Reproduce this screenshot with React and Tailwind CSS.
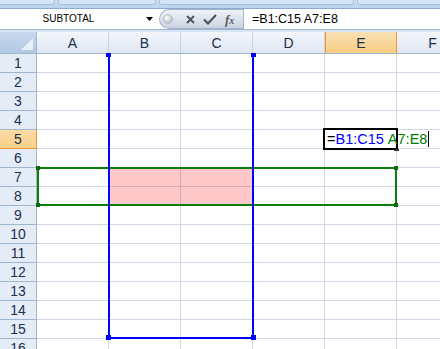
import React from 'react'

const COLS = ['A', 'B', 'C', 'D', 'E', 'F']
const ROWS = Array.from({ length: 16 }, (_, i) => i + 1)

function TopStrip() {
  return (
    <div className="h-[9px] flex bg-gradient-to-b from-[#cddff3] to-[#bcd2ee] border-b border-[#8eaad0]">
      <div className="w-[55px] h-[5px] rounded-br-[3px] border-r border-b border-[#a9c0dd] bg-[#d6e5f6]" />
      <div className="w-[98px] h-[5px] ml-[3px] rounded-b-[3px] border-x border-b border-[#a9c0dd] bg-[#d6e5f6]" />
      <div className="w-[195px] h-[5px] ml-[3px] rounded-b-[3px] border-x border-b border-[#a9c0dd] bg-[#d6e5f6]" />
      <div className="flex-1 h-[5px] ml-[3px] rounded-bl-[3px] border-l border-b border-[#a9c0dd] bg-[#d6e5f6]" />
    </div>
  )
}

function FormulaBar() {
  return (
    <div className="h-[21px] flex items-stretch bg-white border-b border-[#9fb4cf]">
      <div className="w-[159px] flex items-center">
        <div className="w-[137px] text-center text-[10px] text-black leading-none">SUBTOTAL</div>
        <svg width="7" height="4" viewBox="0 0 7 4" className="ml-[9px]">
          <path d="M0 0 H7 L3.5 4 Z" fill="#000" />
        </svg>
      </div>
      <div className="w-[84px] flex items-center rounded-l-[11px] border border-r-0 border-[#a3b3c8] bg-gradient-to-b from-[#eef2f7] via-[#dde4ee] to-[#c8d3e2]">
        <div className="w-[10px] h-[10px] ml-[3px] rounded-full bg-[radial-gradient(circle_at_35%_35%,#ffffff,#a8afb8)] border border-[#b4bcc6]" />
        <svg width="9" height="9" viewBox="0 0 9 9" className="ml-[13px]">
          <path d="M1 1 L8 8 M8 1 L1 8" stroke="#4d4f52" strokeWidth="1.8" />
        </svg>
        <svg width="14" height="11" viewBox="0 0 14 11" className="ml-[8px]">
          <path d="M1 5.5 L5 9.5 L13 1" stroke="#4d4f52" strokeWidth="2" fill="none" />
        </svg>
        <span className="ml-[8px] font-['Liberation_Serif',serif] italic font-bold text-[13px] leading-none text-[#5a5c60]">
          f<span className="text-[10px]">x</span>
        </span>
      </div>
      <div className="flex-1 flex items-center border-l border-[#a3b3c8] pl-[8px] text-[12.5px] text-black leading-none">
        =B1:C15 A7:E8
      </div>
    </div>
  )
}

function Header() {
  return (
    <div className="h-[22px] flex border-b border-[#9eb6ce]">
      <div className="w-[37px] shrink-0 relative bg-gradient-to-b from-[#c7d8ee] to-[#b2c8e4] border-r border-[#9eb6ce]">
        <svg width="12" height="12" viewBox="0 0 12 12" className="absolute right-[3px] bottom-[3px]">
          <path d="M12 0 V12 H0 Z" fill="#e8f0fa" />
        </svg>
      </div>
      {COLS.map((c) => (
        <div
          key={c}
          className={
            'w-[72px] shrink-0 flex items-center justify-center text-[14px] leading-none border-r ' +
            (c === 'E'
              ? 'bg-gradient-to-b from-[#fae2b6] to-[#f6cb80] border-[#f29536] border-l text-[#1c2f4c]'
              : 'bg-gradient-to-b from-[#f4f7fb] to-[#dde6f2] border-[#c5d3e4] text-[#1c2f4c]')
          }
        >
          {c}
        </div>
      ))}
    </div>
  )
}

function Row({ n }) {
  const active = n === 5
  return (
    <div className="h-[19px] flex shrink-0">
      <div
        className={
          'w-[37px] shrink-0 flex items-center justify-center text-[14px] leading-none border-r border-b ' +
          (active
            ? 'bg-gradient-to-b from-[#fbdca3] to-[#f8d08c] border-[#f29536] text-[#1c2f4c]'
            : 'bg-[#e4ecf7] border-b-[#9eb6ce] border-r-[#9eb6ce] text-[#1c2f4c]')
        }
      >
        {n}
      </div>
      {COLS.map((c) => (
        <div key={c} className="w-[72px] shrink-0 border-r border-b border-[#d0d7e5] bg-white" />
      ))}
    </div>
  )
}

export default function App() {
  return (
    <div className="w-[440px] h-[349px] overflow-hidden relative bg-white font-['Liberation_Sans',sans-serif]">
      <TopStrip />
      <FormulaBar />
      <div className="h-[2px] bg-[#dae5f3]" />
      <Header />
      <div className="flex flex-col">
        {ROWS.map((n) => (
          <Row key={n} n={n} />
        ))}
      </div>

      {/* pink fill B7:C8 */}
      <div className="absolute left-[109px] top-[168px] w-[144px] h-[37px] bg-[#ff000036]" />

      {/* green range A7:E8 */}
      <div className="absolute left-[37px] top-[167px] w-[360px] h-[39px] border-[2px] border-[#0a800a]" />
      <div className="absolute left-[36px] top-[166px] w-[4px] h-[4px] bg-[#0a6a0a]" />
      <div className="absolute left-[36px] top-[203px] w-[4px] h-[4px] bg-[#0a6a0a]" />
      <div className="absolute left-[394px] top-[166px] w-[4px] h-[4px] bg-[#0a6a0a]" />
      <div className="absolute left-[394px] top-[203px] w-[4px] h-[4px] bg-[#0a6a0a]" />

      {/* blue range B1:C15 */}
      <div className="absolute left-[108px] top-[54px] w-[146px] h-[285px] border-[2px] border-t-0 border-[#0000ff]" />
      <div className="absolute left-[106px] top-[53px] w-[5px] h-[4px] bg-[#0000ff]" />
      <div className="absolute left-[251px] top-[53px] w-[5px] h-[4px] bg-[#0000ff]" />
      <div className="absolute left-[106px] top-[335px] w-[5px] h-[5px] bg-[#0000ff]" />
      <div className="absolute left-[251px] top-[335px] w-[5px] h-[5px] bg-[#0000ff]" />

      {/* in-cell editor E5 */}
      <div className="absolute left-[323px] top-[128px] w-[75px] h-[22px] border-[2px] border-black bg-white" />
      <div className="absolute left-[394px] top-[149px] w-[5px] h-[2px] bg-[#333]" />
      <div className="absolute left-[327px] top-[129px] h-[20px] flex items-center text-[14.5px] leading-none whitespace-nowrap">
        <span className="text-black">=</span>
        <span className="text-[#0000ff]">B1:C15</span>
        <span className="text-[#008000]">&nbsp;A7:E8</span>
        <span className="ml-[1px] w-[1px] h-[16px] bg-black" />
      </div>
    </div>
  )
}
